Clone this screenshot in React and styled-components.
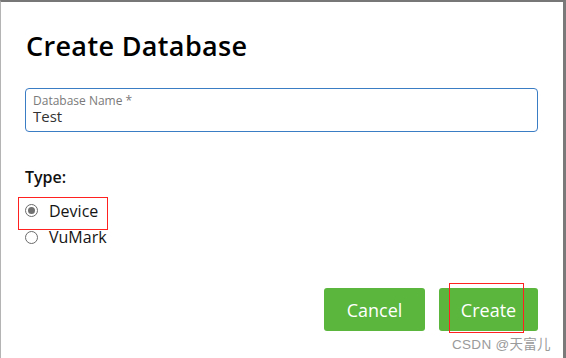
import styled, { createGlobalStyle } from "styled-components";

const GlobalStyle = createGlobalStyle`
  html, body {
    margin: 0;
    padding: 0;
    background: #ffffff;
  }
  body {
    font-family: "Open Sans", "Noto Sans", sans-serif;
  }
`;

const Dialog = styled.div`
  position: relative;
  box-sizing: border-box;
  width: 566px;
  height: 358px;
  background: #ffffff;
  border-top: 2px solid #777777;
  border-left: 1px solid #b4b4b4;
  border-right: 3px solid #7a7a7a;
  padding: 26px 25px 0 24px;
  display: flex;
  flex-direction: column;
`;

const Title = styled.h1`
  margin: 0 0 0 1px;
  font-size: 27px;
  line-height: 36px;
  font-weight: 600;
  letter-spacing: 0.35px;
  color: #000000;
`;

const Field = styled.div`
  margin-top: 24px;
  box-sizing: border-box;
  height: 44px;
  border: 1px solid #3b7dc4;
  border-radius: 4px;
  padding: 5px 7px 0;
  display: flex;
  flex-direction: column;
`;

const FieldLabel = styled.label`
  font-size: 12px;
  line-height: 13px;
  color: #7a7a7a;
`;

const FieldValue = styled.div`
  font-size: 15px;
  line-height: 18px;
  color: #333333;
`;

const TypeLabel = styled.div`
  margin-top: 35px;
  font-size: 16px;
  line-height: 20px;
  font-weight: 600;
  color: #111111;
`;

const RadioGroup = styled.div`
  margin-top: 11px;
  display: flex;
  flex-direction: column;
`;

const RadioRow = styled.label`
  display: flex;
  align-items: center;
  gap: 11px;
  height: 26px;
  font-size: 16px;
  line-height: 26px;
  color: #141414;
`;

const RadioCircle = styled.span`
  box-sizing: border-box;
  width: 13px;
  height: 13px;
  border-radius: 50%;
  border: 1px solid #6b6b6b;
  background: #ffffff;
  display: flex;
  align-items: center;
  justify-content: center;
  margin-top: ${(p) => (p.$checked ? "-2px" : "0")};

  &::after {
    content: "";
    width: 7px;
    height: 7px;
    border-radius: 50%;
    background: #707070;
    display: ${(p) => (p.$checked ? "block" : "none")};
  }
`;

const Actions = styled.div`
  margin-top: 38px;
  display: flex;
  justify-content: flex-end;
  gap: 14px;
`;

const ButtonSlot = styled.div`
  position: relative;
`;

const Button = styled.button`
  box-sizing: border-box;
  width: ${(p) => p.$width}px;
  height: 43px;
  border: none;
  border-radius: 3px;
  background: #5ab63c;
  color: #ffffff;
  font-family: "Open Sans", "Noto Sans", sans-serif;
  font-size: 18px;
  cursor: pointer;
`;

const Mark = styled.div`
  position: absolute;
  z-index: 2;
  box-sizing: border-box;
  border: 1px solid #ff2020;
  pointer-events: none;
`;

const Watermark = styled.div`
  position: absolute;
  left: 451px;
  top: 331px;
  font-family: "Liberation Sans", "Noto Sans CJK SC", sans-serif;
  font-size: 13.5px;
  color: #9a9a9a;
  letter-spacing: 0.3px;
`;

const types = [
  { id: "device", label: "Device", checked: true },
  { id: "vumark", label: "VuMark", checked: false },
];

export default function App() {
  return (
    <>
      <GlobalStyle />
      <Dialog>
        <Title>Create Database</Title>

        <Field>
          <FieldLabel>Database Name *</FieldLabel>
          <FieldValue>Test</FieldValue>
        </Field>

        <TypeLabel>Type:</TypeLabel>
        <RadioGroup>
          {types.map((t) => (
            <RadioRow key={t.id}>
              <RadioCircle $checked={t.checked} />
              {t.label}
            </RadioRow>
          ))}
        </RadioGroup>

        <Actions>
          <Button $width={101}>Cancel</Button>
          <ButtonSlot>
            <Button $width={99}>Create</Button>
            <Mark style={{ left: 10, top: -5, width: 75, height: 50 }} />
          </ButtonSlot>
        </Actions>

        <Mark style={{ left: 17, top: 195, width: 90, height: 33 }} />
        <Watermark>CSDN @天富儿</Watermark>
      </Dialog>
    </>
  );
}
